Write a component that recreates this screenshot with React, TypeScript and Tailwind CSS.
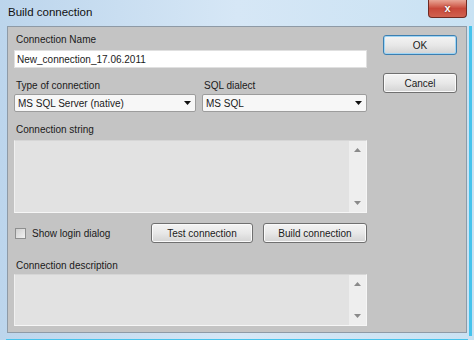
import React from "react";

function Caret({ up = false }: { up?: boolean }) {
  return (
    <svg width="7" height="4" viewBox="0 0 7 4" className="block">
      {up ? <path d="M0 4 L3.5 0 L7 4 Z" fill="#8a8a8a" /> : <path d="M0 0 L7 0 L3.5 4 Z" fill="#8a8a8a" />}
    </svg>
  );
}

function Memo({ height }: { height: string }) {
  return (
    <div className={`flex w-[353px] ${height} border border-[#f6f6f6] border-t-[#d6d6d6] border-l-[#f0f0f0] bg-[#e2e2e2]`}>
      <div className="flex-1" />
      <div className="flex w-[17px] flex-col items-center justify-between bg-[#eeeeee] py-[7px]">
        <Caret up />
        <Caret />
      </div>
    </div>
  );
}

function Combo({ text, width }: { text: string; width: string }) {
  return (
    <div className={`flex h-[18px] ${width} items-center justify-between rounded-[2px] border border-[#9c9c9c] bg-[#f7f7f7] pl-[3px] pr-[4px]`}>
      <span>{text}</span>
      <svg width="7" height="4" viewBox="0 0 7 4">
        <path d="M0 0 L7 0 L3.5 4 Z" fill="#111" />
      </svg>
    </div>
  );
}

function Btn({ label, width, focused = false }: { label: string; width: string; focused?: boolean }) {
  return (
    <div
      className={`flex h-[20px] ${width} items-center justify-center rounded-[3px] border bg-gradient-to-b from-[#f4f4f4] via-[#e8e8e8] to-[#d3d3d3] text-[10px] text-[#1a1a1a] ${
        focused ? "border-[#3c7fb1] shadow-[inset_0_0_0_1px_#9fd5f5]" : "border-[#707070] shadow-[inset_0_0_0_1px_#fafafa]"
      }`}
    >
      {label}
    </div>
  );
}

export default function App() {
  return (
    <div className="relative h-[340px] w-[474px] overflow-hidden bg-gradient-to-r from-[#bcd5ec] via-[#d6e7f6] to-[#c9e2f3] font-['Liberation_Sans',Arial,sans-serif] text-[10px] text-[#1a1a1a]">
      {/* title bar */}
      <div className="flex h-[26px] items-center pl-[8px] text-[11.5px] text-[#111]">Build connection</div>

      {/* close button */}
      <div className="absolute left-[428px] top-0 flex h-[18px] w-[39px] items-center justify-center rounded-b-[4px] border border-t-0 border-[#6f2a22] bg-gradient-to-b from-[#e8a596] via-[#c8483a] to-[#d0614f]">
        <span className="text-[11px] font-bold leading-none text-white [text-shadow:0_0_2px_#5a1a10]">x</span>
      </div>

      <div className="flex">
        <div className="w-[7px]" />
        {/* client area */}
        <div className="flex h-[307px] w-[460px] border border-[#8e9aa6] bg-[#c4c4c4]">
          <div className="flex w-[359px] flex-col pl-[6px] pt-[7px]">
            <div className="h-[12px] pl-[2px] leading-[12px]">Connection Name</div>
            <div className="mt-[4px] flex h-[18px] w-[353px] items-center border border-[#e0e0e0] bg-white pl-[2px]">
              New_connection_17.06.2011
            </div>

            <div className="mt-[12px] flex gap-[6px]">
              <div className="flex flex-col">
                <div className="h-[12px] pl-[2px] leading-[12px]">Type of connection</div>
                <div className="mt-[2px]">
                  <Combo text="MS SQL Server (native)" width="w-[182px]" />
                </div>
              </div>
              <div className="flex flex-col">
                <div className="h-[12px] pl-[2px] leading-[12px]">SQL dialect</div>
                <div className="mt-[2px]">
                  <Combo text="MS SQL" width="w-[165px]" />
                </div>
              </div>
            </div>

            <div className="mt-[12px] h-[12px] pl-[2px] leading-[12px]">Connection string</div>
            <div className="mt-[4px]">
              <Memo height="h-[73px]" />
            </div>

            <div className="mt-[10px] flex h-[20px] w-[353px] items-center">
              <div className="ml-[1px] h-[11px] w-[11px] border border-[#8e8f8f] bg-gradient-to-br from-[#cfcfcf] to-[#f2f2f2]" />
              <span className="ml-[6px]">Show login dialog</span>
              <div className="ml-auto flex gap-[10px]">
                <Btn label="Test connection" width="w-[102px]" />
                <Btn label="Build connection" width="w-[104px]" />
              </div>
            </div>

            <div className="mt-[17px] h-[12px] pl-[2px] leading-[12px]">Connection description</div>
            <div className="mt-[2px]">
              <Memo height="h-[52px]" />
            </div>
          </div>

          <div className="ml-[16px] flex flex-col pt-[8px]">
            <Btn label="OK" width="w-[74px]" focused />
            <div className="mt-[18px]">
              <Btn label="Cancel" width="w-[74px]" />
            </div>
          </div>
        </div>
        <div className="ml-[2px] mt-0 h-[310px] w-[3px] bg-[#46c3ec]" />
      </div>
      <div className="ml-[6px] mt-[3px] h-[3px] w-[462px] bg-[#46c3ec]" />
    </div>
  );
}
